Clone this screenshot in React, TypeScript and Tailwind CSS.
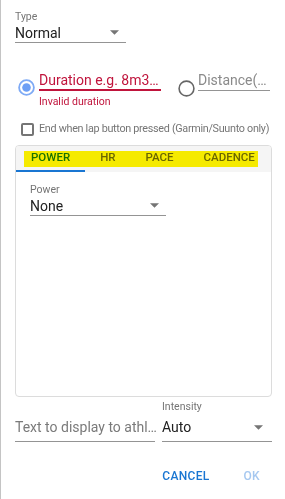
import React from 'react'

const tabs = [
  { label: 'POWER', active: true },
  { label: 'HR', active: false },
  { label: 'PACE', active: false },
  { label: 'CADENCE', active: false },
]

function Arrow() {
  return (
    <svg width="9" height="5" viewBox="0 0 10 5" className="shrink-0">
      <path d="M0 0l5 5 5-5z" fill="#757575" />
    </svg>
  )
}

function RadioOn() {
  return (
    <svg width="17" height="17" viewBox="0 0 17 17" className="shrink-0">
      <circle cx="8.5" cy="8.5" r="7.4" fill="none" stroke="#7eaaf5" strokeWidth="1.8" />
      <circle cx="8.5" cy="8.5" r="4.3" fill="#6d9ff5" />
    </svg>
  )
}

function RadioOff() {
  return (
    <svg width="17" height="17" viewBox="0 0 17 17" className="shrink-0">
      <circle cx="8.5" cy="8.5" r="7.4" fill="none" stroke="#666" strokeWidth="1.6" />
    </svg>
  )
}

function SelectField({
  label,
  value,
  width,
}: {
  label: string
  value: string
  width: string
}) {
  return (
    <div className={width}>
      <div className="h-[13px] text-[10.5px] leading-[13px] text-[#757575]">{label}</div>
      <div className="h-[20px] flex items-center justify-between border-b border-[#949494] pr-[7px]">
        <span className="text-[14px] leading-[18px] text-[#212121]">{value}</span>
        <Arrow />
      </div>
    </div>
  )
}

export default function App() {
  return (
    <div className="w-[285px] h-[499px] bg-white border-l border-[#c4c4c4] overflow-hidden font-['Roboto','Liberation_Sans',sans-serif]">
      <div className="pl-[14px] pr-[13px] pt-[10px]">
        <SelectField label="Type" value="Normal" width="w-[111px]" />

        {/* duration / distance */}
        <div className="mt-[28px] flex items-start">
          <div className="mt-[8px] ml-[3px]">
            <RadioOn />
          </div>
          <div className="ml-[4px] w-[122px] shrink-0">
            <div className="h-[20px] border-b-2 border-[#c0143c] text-[14px] leading-[18px] text-[#c0143c] whitespace-nowrap overflow-hidden">
              Duration e.g. 8m3…
            </div>
            <div className="mt-[4px] text-[10.5px] leading-[13px] text-[#c0143c]">Invalid duration</div>
          </div>
          <div className="mt-[9px] ml-[17px]">
            <RadioOff />
          </div>
          <div className="ml-[3px] w-[72px] h-[20px] border-b border-[#949494] text-[14px] leading-[18px] text-[#8a8a8a] whitespace-nowrap overflow-hidden">
            Distance(…
          </div>
        </div>

        {/* lap checkbox */}
        <div className="mt-[14px] flex items-center h-[14px]">
          <div className="shrink-0 ml-[6px] w-[13px] h-[13px] rounded-[2px] border-2 border-[#757575]" />
          <span className="ml-[5px] text-[10.8px] leading-[14px] text-[#757575] whitespace-nowrap tracking-[-0.3px]">
            End when lap button pressed (Garmin/Suunto only)
          </span>
        </div>

        {/* tabs card */}
        <div className="mt-[9px] h-[252px] rounded-[4px] border border-[#dcdcdc] overflow-hidden">
          <div className="relative h-[26px] bg-[#f5f5f5] flex">
            {tabs.map((t) => (
              <div
                key={t.label}
                className={`shrink-0 px-[15px] h-full flex items-center text-[11.5px] font-medium ${
                  t.active ? 'text-[#1976d2] border-b-2 border-[#1976d2]' : 'text-[#6b6b6b] border-b-2 border-transparent'
                }`}
              >
                {t.label}
              </div>
            ))}
            <div className="absolute left-[8px] top-[5px] w-[234px] h-[16px] bg-[#fff400] mix-blend-multiply" />
          </div>
          <div className="pl-[14px] pt-[11px]">
            <SelectField label="Power" value="None" width="w-[136px]" />
          </div>
        </div>

        {/* bottom row */}
        <div className="mt-[3px] flex items-end gap-[7px]">
          <div className="w-[140px] h-[29px] flex items-center border-b border-[#949494]">
            <span className="text-[14px] leading-[18px] text-[#7a7a7a] whitespace-nowrap">Text to display to athl…</span>
          </div>
          <div className="w-[110px]">
            <div className="h-[13px] text-[10.5px] leading-[13px] text-[#757575]">Intensity</div>
            <div className="h-[29px] flex items-center justify-between border-b border-[#949494] pr-[9px]">
              <span className="text-[14px] leading-[18px] text-[#212121]">Auto</span>
              <Arrow />
            </div>
          </div>
        </div>

        {/* actions */}
        <div className="mt-[25px] flex justify-end pr-[12px] text-[12px] font-medium tracking-[0.3px]">
          <span className="text-[#1976d2]">CANCEL</span>
          <span className="ml-[34px] text-[#a6c8f0]">OK</span>
        </div>
      </div>
    </div>
  )
}
